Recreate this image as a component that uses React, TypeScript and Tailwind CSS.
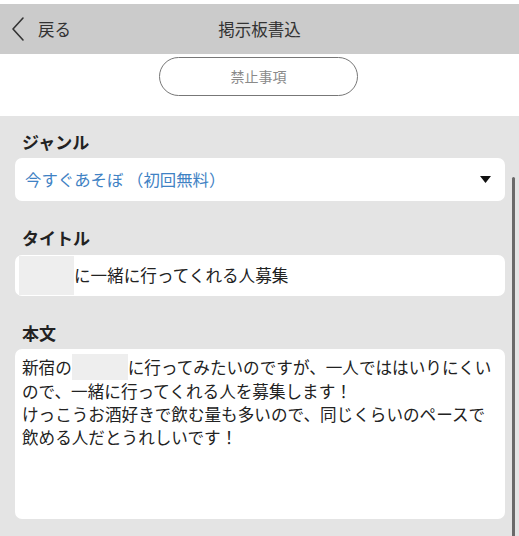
import React from "react";

const jp = { fontFamily: '"Noto Sans CJK JP", "Noto Sans", sans-serif' };

export default function App() {
  return (
    <div className="relative w-[519px] h-[536px] overflow-hidden bg-[#e4e4e4] text-[#222]" style={jp}>
      <div className="h-[4px] bg-white" />
      <div className="relative h-[50px] bg-[#cbcbcb] flex items-center">
        <div className="flex items-center pl-[10px]">
          <svg width="16" height="26" viewBox="0 0 16 26" className="mr-[12px]">
            <path d="M13 2 L3 13 L13 24" fill="none" stroke="#333" strokeWidth="1.6" strokeLinecap="round" strokeLinejoin="round" />
          </svg>
          <span className="text-[16.5px] text-[#333]">戻る</span>
        </div>
        <div className="absolute inset-0 flex items-center justify-center text-[16.5px] text-[#333] pointer-events-none">
          掲示板書込
        </div>
      </div>
      <div className="h-[62px] bg-white flex justify-center pt-[3px]">
        <div className="w-[199px] h-[39px] rounded-full border-[1.5px] border-[#777] flex items-center justify-center text-[14px] text-[#8a8a8a] ml-[-2px]">
          禁止事項
        </div>
      </div>
      <div className="px-[15px] pr-[14px]">
        <div className="pt-[16px] pl-[7px] text-[17px] font-bold leading-[20px]">ジャンル</div>
        <div className="mt-[6px] h-[43px] rounded-[7px] bg-white flex items-center pl-[10px] pr-[14px]">
          <span className="text-[16.4px] text-[#3f82c4] flex-1">今すぐあそぼ （初回無料）</span>
          <svg width="11" height="7" viewBox="0 0 11 7">
            <path d="M0 0 H11 L5.5 7 Z" fill="#111" />
          </svg>
        </div>
        <div className="pt-[27px] pl-[7px] text-[17px] font-bold leading-[20px]">タイトル</div>
        <div className="mt-[7px] h-[41px] rounded-[7px] bg-white flex items-center pl-[4px]">
          <div className="w-[55px] h-[39px] bg-[#eeeeee]" />
          <span className="text-[16.6px]">に一緒に行ってくれる人募集</span>
        </div>
        <div className="pt-[27px] pl-[7px] text-[17px] font-bold leading-[20px]">本文</div>
        <div className="mt-[6px] h-[170px] rounded-[7px] bg-white pl-[7px] pt-[5px] text-[16.6px] leading-[23px]">
          <div className="flex items-center">
            <span>新宿の</span>
            <span className="inline-block w-[56px] h-[26px] bg-[#eeeeee]" />
            <span>に行ってみたいのですが、一人でははいりにくい</span>
          </div>
          <div>ので、一緒に行ってくれる人を募集します！</div>
          <div>けっこうお酒好きで飲む量も多いので、同じくらいのペースで</div>
          <div>飲める人だとうれしいです！</div>
        </div>
      </div>
      <div className="absolute left-[512px] top-[177px] w-[3px] h-[360px] bg-[#6a6a6a] rounded-full" />
    </div>
  );
}
